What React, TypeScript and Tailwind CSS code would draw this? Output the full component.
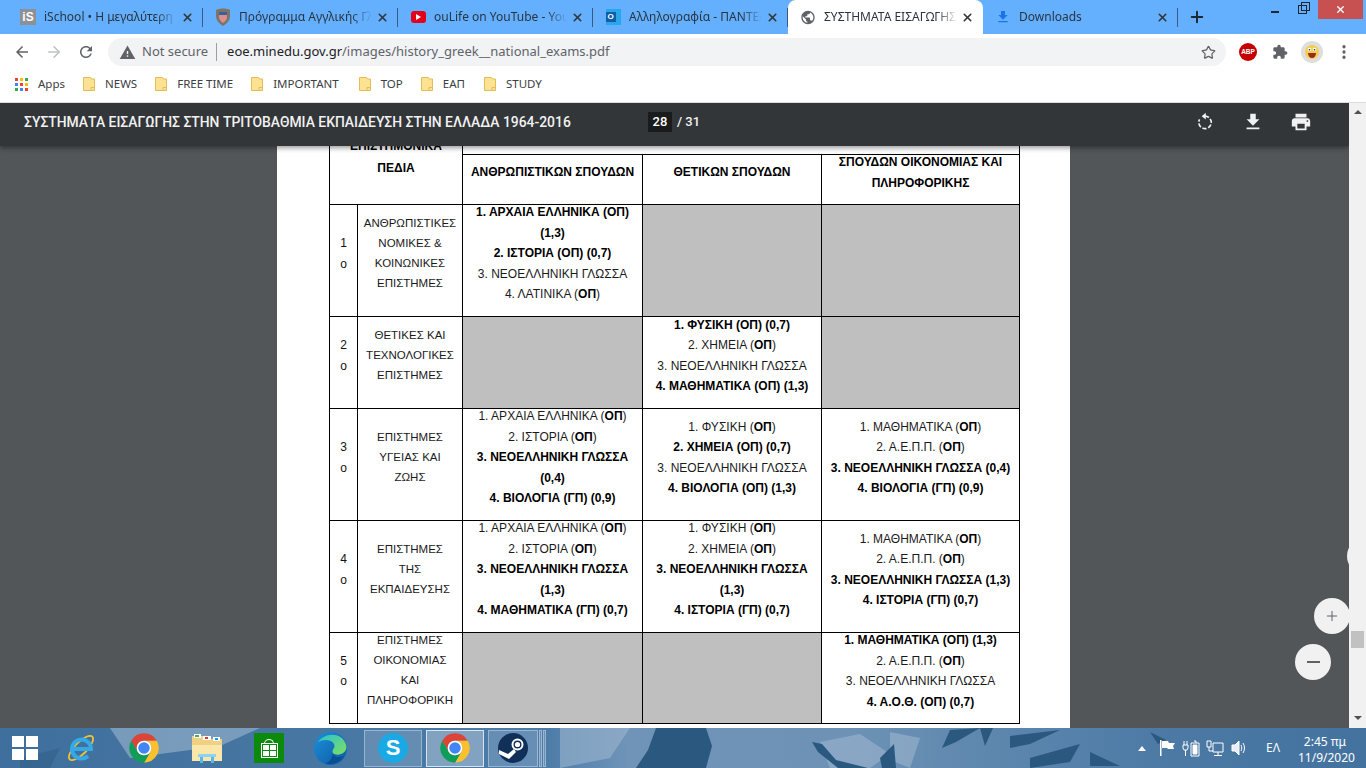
import type { ReactNode } from 'react';
import { ArrowRight, MoreVertical, Plus, Star, X } from 'lucide-react';

const ui = 'font-["Noto_Sans",sans-serif]';

function Mat({ d, className }: { d: string; className: string }) {
  return (
    <svg viewBox="0 0 24 24" className={className} fill="currentColor">
      <path d={d} />
    </svg>
  );
}

const icons = {
  back: 'M20 11H7.83l5.59-5.59L12 4l-8 8 8 8 1.41-1.41L7.83 13H20v-2z',
  reload:
    'M17.65 6.35C16.2 4.9 14.21 4 12 4c-4.42 0-7.99 3.58-7.99 8s3.57 8 7.99 8c3.73 0 6.84-2.55 7.73-6h-2.08c-.82 2.33-3.04 4-5.65 4-3.31 0-6-2.69-6-6s2.69-6 6-6c1.66 0 3.14.69 4.22 1.78L13 11h7V4l-2.35 2.35z',
  warn: 'M1 21h22L12 2 1 21zm12-3h-2v-2h2v2zm0-4h-2v-4h2v4z',
  download: 'M19 9h-4V3H9v6H5l7 7 7-7zM5 18v2h14v-2H5z',
  print:
    'M19 8H5c-1.66 0-3 1.34-3 3v6h4v4h12v-4h4v-6c0-1.66-1.34-3-3-3zm-3 11H8v-5h8v5zm3-7c-.55 0-1-.45-1-1s.45-1 1-1 1 .45 1 1-.45 1-1 1zm-1-9H6v4h12V3z',
  puzzle:
    'M20.5 11H19V7c0-1.1-.9-2-2-2h-4V3.5C13 2.12 11.88 1 10.5 1S8 2.12 8 3.5V5H4c-1.1 0-1.99.9-1.99 2v3.8H3.5c1.49 0 2.7 1.21 2.7 2.7s-1.21 2.7-2.7 2.7H2V20c0 1.1.9 2 2 2h3.8v-1.5c0-1.49 1.21-2.7 2.7-2.7 1.49 0 2.7 1.21 2.7 2.7V22H17c1.1 0 2-.9 2-2v-4h1.5c1.38 0 2.5-1.12 2.5-2.5S21.88 11 20.5 11z',
  globe:
    'M12 2C6.48 2 2 6.48 2 12s4.48 10 10 10 10-4.48 10-10S17.52 2 12 2zm-1 17.93c-3.95-.49-7-3.85-7-7.93 0-.62.08-1.21.21-1.79L9 15v1c0 1.1.9 2 2 2v1.93zm6.9-2.54c-.26-.81-1-1.39-1.9-1.39h-1v-3c0-.55-.45-1-1-1H8v-2h2c.55 0 1-.45 1-1V7h2c1.1 0 2-.9 2-2v-.41c2.93 1.19 5 4.06 5 7.41 0 2.08-.8 3.97-2.1 5.39z',
};

function ChromeLogo({ className }: { className: string }) {
  return (
    <svg viewBox="0 0 24 24" className={className}>
      <path fill="#db4437" d="M2.47 6.5A11 11 0 0 1 21.53 6.5H12A5.5 5.5 0 0 0 7.24 14.75Z" />
      <path fill="#fbc02d" d="M21.53 6.5A11 11 0 0 1 12 23L16.76 14.75A5.5 5.5 0 0 0 12 6.5Z" />
      <path fill="#0f9d58" d="M12 23A11 11 0 0 1 2.47 6.5L7.24 14.75A5.5 5.5 0 0 0 16.76 14.75Z" />
      <circle cx="12" cy="12" r="5.5" fill="#fff" />
      <circle cx="12" cy="12" r="4.3" fill="#4285f4" />
    </svg>
  );
}

function Tab({
  icon,
  title,
  active,
  last,
}: {
  icon: ReactNode;
  title: string;
  active?: boolean;
  last?: boolean;
}) {
  return (
    <div
      className={`relative flex h-[34px] w-[195px] shrink-0 items-center pl-[12px] ${
        active ? 'rounded-t-[8px] bg-white' : ''
      }`}
    >
      <div className="flex w-[16px] shrink-0 items-center justify-center">{icon}</div>
      <div className="ml-[8px] w-[133px] overflow-hidden whitespace-nowrap text-[12px] text-[#2a3440] [mask-image:linear-gradient(to_right,black_85%,transparent)]">
        {title}
      </div>
      <X className="ml-[4px] h-[13px] w-[13px] shrink-0 text-[#323639]" strokeWidth={3} />
      {!last && !active && <div className="absolute right-0 top-[8px] h-[19px] w-px bg-[#3c5a80]" />}
    </div>
  );
}

function Folder() {
  return (
    <svg viewBox="0 0 12 14" className="h-[14px] w-[12px] shrink-0">
      <path d="M.5.5h7l1 1.5h3v11.5H.5z" fill="#fde293" stroke="#e2bd55" />
      <path d="M8 13.5v-3h3.5" fill="none" stroke="#e2bd55" />
    </svg>
  );
}

function Bookmark({ label, className }: { label: string; className: string }) {
  return (
    <div className={`flex items-center gap-[10px] text-[11.5px] text-[#3c4043] ${className}`}>
      <Folder />
      <span>{label}</span>
    </div>
  );
}

function TabStrip() {
  return (
    <div className="relative flex h-[34px] bg-[#64b0ff] pl-[8px]">
      <Tab
        title="iSchool • Η μεγαλύτερη"
        icon={
          <div className="flex h-[16px] w-[16px] items-center justify-center bg-[#8d9196] font-['Liberation_Sans',sans-serif] text-[12px] font-bold leading-none text-white">
            iS
          </div>
        }
      />
      <Tab
        title="Πρόγραμμα Αγγλικής Γλ"
        icon={
          <svg viewBox="0 0 16 18" className="h-[18px] w-[16px]">
            <path d="M1 2c4-2 10-2 14 0v6c0 5-4 8-7 10-3-2-7-5-7-10z" fill="#7d7468" />
            <path d="M4 4h8v5c0 3-2 4-4 6-2-2-4-3-4-6z" fill="#d98f8f" />
            <path d="M4 4h8v3H4z" fill="#3c5f95" />
          </svg>
        }
      />
      <Tab
        title="ouLife on YouTube - You"
        icon={
          <div className="flex h-[12px] w-[15px] items-center justify-center rounded-[3px] bg-[#e3001b]">
            <div className="h-0 w-0 border-y-[3px] border-l-[5px] border-y-transparent border-l-white" />
          </div>
        }
      />
      <Tab
        title="Αλληλογραφία - ΠΑΝΤΕΛ"
        icon={
          <div className="relative h-[16px] w-[15px] bg-[#28a8ea]">
            <div className="absolute left-0 top-[3px] flex h-[10px] w-[10px] items-center justify-center bg-[#0f5ea8] font-['Liberation_Sans',sans-serif] text-[8px] font-bold leading-none text-white">
              O
            </div>
          </div>
        }
      />
      <Tab
        active
        title="ΣΥΣΤΗΜΑΤΑ ΕΙΣΑΓΩΓΗΣ"
        icon={<Mat d={icons.globe} className="h-[17px] w-[17px] text-[#5f6368]" />}
      />
      <Tab
        title="Downloads"
        icon={<Mat d={icons.download} className="h-[16px] w-[16px] text-[#1a73e8]" />}
      />
      <Plus className="ml-[10px] mt-[8px] h-[18px] w-[18px] text-[#1c2733]" strokeWidth={2.6} />
      <div className="absolute right-[3px] top-0 flex items-start">
        <div className="mt-[11px] h-[2px] w-[8px] bg-[#1c2733]" />
        <div className="relative ml-[19px] mt-[5px] mr-[11px] h-[9px] w-[9px] border border-[#1c2733]">
          <div className="absolute left-[2px] top-[-4px] h-[9px] w-[9px] border border-[#1c2733]" />
        </div>
        <div className="flex h-[19px] w-[45px] items-center justify-center bg-[#c75050]">
          <X className="h-[11px] w-[11px] text-white" strokeWidth={3} />
        </div>
      </div>
    </div>
  );
}

function AddressBar() {
  return (
    <div className="flex h-[34px] items-center bg-white pl-[13px] pr-[12px] pt-[2px] text-[#5f6368]">
      <Mat d={icons.back} className="h-[18px] w-[18px]" />
      <ArrowRight className="ml-[14px] h-[18px] w-[18px] text-[#bdc1c6]" strokeWidth={2} />
      <Mat d={icons.reload} className="ml-[14px] h-[18px] w-[18px]" />
      <div className="ml-[13px] flex h-[28px] w-[1118px] items-center rounded-full bg-[#f1f3f4] pl-[11px] pr-[10px]">
        <Mat d={icons.warn} className="h-[17px] w-[17px] shrink-0 text-[#5f6368]" />
        <span className="ml-[6px] text-[13px] text-[#5f6368]">Not secure</span>
        <div className="ml-[8px] h-[18px] w-px bg-[#9aa0a6]" />
        <span className="ml-[10px] text-[13px] text-[#5f6368]">
          <span className="text-[#202124]">eoe.minedu.gov.gr</span>/images/history_greek__national_exams.pdf
        </span>
        <Star className="ml-auto h-[15px] w-[15px] text-[#5f6368]" strokeWidth={2} />
      </div>
      <div className="ml-[13px] flex h-[18px] w-[18px] items-center justify-center rounded-full bg-[#c40000] font-['Liberation_Sans',sans-serif] text-[6.5px] font-bold leading-none text-white">
        ABP
      </div>
      <Mat d={icons.puzzle} className="ml-[15px] h-[16px] w-[16px] text-[#5f6368]" />
      <div className="ml-[13px] flex h-[22px] w-[22px] items-center justify-center rounded-full bg-[#dedede]">
        <svg viewBox="0 0 16 16" className="h-[16px] w-[16px]">
          <circle cx="8" cy="8" r="7" fill="#f3cf4e" />
          <circle cx="5.5" cy="5.5" r="1.8" fill="#fff" />
          <circle cx="10.5" cy="5.5" r="1.8" fill="#fff" />
          <circle cx="5.5" cy="5.8" r=".8" fill="#222" />
          <circle cx="10.5" cy="5.8" r=".8" fill="#222" />
          <path d="M4 9h8c0 3-2 5-4 5s-4-2-4-5z" fill="#9c2a22" />
        </svg>
      </div>
      <MoreVertical className="ml-[12px] h-[18px] w-[18px] text-[#5f6368]" strokeWidth={2.4} />
    </div>
  );
}

function Bookmarks() {
  const dots = ['#ea4335', '#fbbc05', '#34a853', '#4285f4', '#ea4335', '#fbbc05', '#34a853', '#4285f4', '#ea4335'];
  return (
    <div className={`flex h-[35px] items-center border-b border-[#dadce0] bg-white pb-[2px] pl-[15px] ${ui}`}>
      <div className="grid h-[13px] w-[13px] grid-cols-3 gap-[2px]">
        {dots.map((c, i) => (
          <div key={i} className="h-[3px] w-[3px]" style={{ backgroundColor: c }} />
        ))}
      </div>
      <span className="ml-[10px] text-[11.5px] text-[#3c4043]">Apps</span>
      <Bookmark label="NEWS" className="ml-[18px]" />
      <Bookmark label="FREE TIME" className="ml-[18px]" />
      <Bookmark label="IMPORTANT" className="ml-[18px]" />
      <Bookmark label="TOP" className="ml-[20px]" />
      <Bookmark label="ΕΑΠ" className="ml-[18px]" />
      <Bookmark label="STUDY" className="ml-[19px]" />
    </div>
  );
}

function PdfToolbar() {
  return (
    <div className="relative z-10 flex h-[43px] shrink-0 items-center bg-[#323639] pb-[5px] pl-[24px] text-white shadow-[0_2px_5px_rgba(0,0,0,0.4)]">
      <div className="w-[624px] whitespace-nowrap font-['Roboto',sans-serif] text-[13.9px] font-medium text-[#f1f1f1]">
        ΣΥΣΤΗΜΑΤΑ ΕΙΣΑΓΩΓΗΣ ΣΤΗΝ ΤΡΙΤΟΒΑΘΜΙΑ ΕΚΠΑΙΔΕΥΣΗ ΣΤΗΝ ΕΛΛΑΔΑ 1964-2016
      </div>
      <div className="flex h-[20px] w-[24px] items-center justify-center bg-[#191b1c] font-['Roboto',sans-serif] text-[13px] font-medium">
        28
      </div>
      <div className="ml-[5px] font-['Roboto',sans-serif] text-[13px] font-medium text-[#f1f1f1]">/ 31</div>
      <svg viewBox="0 0 24 24" className="ml-[495px] h-[20px] w-[20px]" fill="none" stroke="#f1f1f1" strokeWidth="2">
        <path d="M12 5a7.5 7.5 0 1 1-6.5 3.8" strokeDasharray="5 2.2" />
        <path d="M13 1v8l-5-4z" fill="#f1f1f1" stroke="none" />
      </svg>
      <Mat d={icons.download} className="ml-[27px] h-[22px] w-[22px] text-[#f1f1f1]" />
      <Mat d={icons.print} className="ml-[26px] h-[22px] w-[22px] text-[#f1f1f1]" />
    </div>
  );
}

type Line = { text: string; kind: 'n' | 'o' | 'b' };
const n = (text: string): Line => ({ text, kind: 'n' });
const o = (text: string): Line => ({ text, kind: 'o' });
const b = (text: string): Line => ({ text, kind: 'b' });

function Cell({ lines }: { lines?: Line[] }) {
  if (!lines) return <div className="bg-[#bfbfbf]" />;
  return (
    <div className="flex flex-col items-center justify-center bg-white pb-[14px] text-center">
      {lines.map((l, i) => (
        <div key={i} className={`whitespace-nowrap ${l.kind === 'b' ? 'font-bold text-black' : ''}`}>
          {l.text}
          {l.kind === 'o' && (
            <>
              {' ('}
              <b className="text-black">ΟΠ</b>
              {')'}
            </>
          )}
        </div>
      ))}
    </div>
  );
}

function Field({ num, lines }: { num: number; lines: string[] }) {
  return (
    <>
      <div className="flex flex-col items-center justify-center bg-white pb-[14px] text-[#111]">
        <div>{num}</div>
        <div>ο</div>
      </div>
      <div className="flex flex-col items-center justify-center bg-white pb-[16px] text-center text-[11.5px] leading-[20px]">
        {lines.map((l) => (
          <div key={l}>{l}</div>
        ))}
      </div>
    </>
  );
}

const rows: { num: number; name: string[]; cells: (Line[] | undefined)[] }[] = [
  {
    num: 1,
    name: ['ΑΝΘΡΩΠΙΣΤΙΚΕΣ', 'ΝΟΜΙΚΕΣ &', 'ΚΟΙΝΩΝΙΚΕΣ', 'ΕΠΙΣΤΗΜΕΣ'],
    cells: [
      [b('1. ΑΡΧΑΙΑ ΕΛΛΗΝΙΚΑ (ΟΠ)'), b('(1,3)'), b('2. ΙΣΤΟΡΙΑ (ΟΠ) (0,7)'), n('3. ΝΕΟΕΛΛΗΝΙΚΗ ΓΛΩΣΣΑ'), o('4. ΛΑΤΙΝΙΚΑ')],
      undefined,
      undefined,
    ],
  },
  {
    num: 2,
    name: ['ΘΕΤΙΚΕΣ ΚΑΙ', 'ΤΕΧΝΟΛΟΓΙΚΕΣ', 'ΕΠΙΣΤΗΜΕΣ'],
    cells: [
      undefined,
      [b('1. ΦΥΣΙΚΗ (ΟΠ) (0,7)'), o('2. ΧΗΜΕΙΑ'), n('3. ΝΕΟΕΛΛΗΝΙΚΗ ΓΛΩΣΣΑ'), b('4. ΜΑΘΗΜΑΤΙΚΑ (ΟΠ) (1,3)')],
      undefined,
    ],
  },
  {
    num: 3,
    name: ['ΕΠΙΣΤΗΜΕΣ', 'ΥΓΕΙΑΣ ΚΑΙ', 'ΖΩΗΣ'],
    cells: [
      [o('1. ΑΡΧΑΙΑ ΕΛΛΗΝΙΚΑ'), o('2. ΙΣΤΟΡΙΑ'), b('3. ΝΕΟΕΛΛΗΝΙΚΗ ΓΛΩΣΣΑ'), b('(0,4)'), b('4. ΒΙΟΛΟΓΙΑ (ΓΠ) (0,9)')],
      [o('1. ΦΥΣΙΚΗ'), b('2. ΧΗΜΕΙΑ (ΟΠ) (0,7)'), n('3. ΝΕΟΕΛΛΗΝΙΚΗ ΓΛΩΣΣΑ'), b('4. ΒΙΟΛΟΓΙΑ (ΟΠ) (1,3)')],
      [o('1. ΜΑΘΗΜΑΤΙΚΑ'), o('2. Α.Ε.Π.Π.'), b('3. ΝΕΟΕΛΛΗΝΙΚΗ ΓΛΩΣΣΑ (0,4)'), b('4. ΒΙΟΛΟΓΙΑ (ΓΠ) (0,9)')],
    ],
  },
  {
    num: 4,
    name: ['ΕΠΙΣΤΗΜΕΣ', 'ΤΗΣ', 'ΕΚΠΑΙΔΕΥΣΗΣ'],
    cells: [
      [o('1. ΑΡΧΑΙΑ ΕΛΛΗΝΙΚΑ'), o('2. ΙΣΤΟΡΙΑ'), b('3. ΝΕΟΕΛΛΗΝΙΚΗ ΓΛΩΣΣΑ'), b('(1,3)'), b('4. ΜΑΘΗΜΑΤΙΚΑ (ΓΠ) (0,7)')],
      [o('1. ΦΥΣΙΚΗ'), o('2. ΧΗΜΕΙΑ'), b('3. ΝΕΟΕΛΛΗΝΙΚΗ ΓΛΩΣΣΑ'), b('(1,3)'), b('4. ΙΣΤΟΡΙΑ (ΓΠ) (0,7)')],
      [o('1. ΜΑΘΗΜΑΤΙΚΑ'), o('2. Α.Ε.Π.Π.'), b('3. ΝΕΟΕΛΛΗΝΙΚΗ ΓΛΩΣΣΑ (1,3)'), b('4. ΙΣΤΟΡΙΑ (ΓΠ) (0,7)')],
    ],
  },
  {
    num: 5,
    name: ['ΕΠΙΣΤΗΜΕΣ', 'ΟΙΚΟΝΟΜΙΑΣ', 'ΚΑΙ', 'ΠΛΗΡΟΦΟΡΙΚΗ'],
    cells: [
      undefined,
      undefined,
      [b('1. ΜΑΘΗΜΑΤΙΚΑ (ΟΠ) (1,3)'), o('2. Α.Ε.Π.Π.'), n('3. ΝΕΟΕΛΛΗΝΙΚΗ ΓΛΩΣΣΑ'), b('4. Α.Ο.Θ. (ΟΠ) (0,7)')],
    ],
  },
];

function ExamTable() {
  return (
    <div className="ml-[52px] grid w-[691px] grid-cols-[27px_104px_179px_178px_197px] grid-rows-[20px_49px_111px_91px_111px_111px_90px] gap-px bg-black p-px font-['Liberation_Sans',sans-serif] text-[12px] leading-[20.5px] text-[#1a1a1a]">
      <div className="col-span-2 row-span-2 bg-white pt-px text-center font-bold leading-[22px] text-black">
        <div>ΕΠΙΣΤΗΜΟΝΙΚΑ</div>
        <div>ΠΕΔΙΑ</div>
      </div>
      <div className="col-span-3 bg-white" />
      <Cell lines={[b('ΑΝΘΡΩΠΙΣΤΙΚΩΝ ΣΠΟΥΔΩΝ')]} />
      <Cell lines={[b('ΘΕΤΙΚΩΝ ΣΠΟΥΔΩΝ')]} />
      <Cell lines={[b('ΣΠΟΥΔΩΝ ΟΙΚΟΝΟΜΙΑΣ ΚΑΙ'), b('ΠΛΗΡΟΦΟΡΙΚΗΣ')]} />
      {rows.map((r) => (
        <Field key={r.num} num={r.num} lines={r.name} />
      )).flatMap((f, i) => [f, ...rows[i].cells.map((c, j) => <Cell key={`${i}-${j}`} lines={c} />)])}
    </div>
  );
}

function Viewer() {
  return (
    <div className="relative flex min-h-0 flex-1 flex-col overflow-hidden bg-[#525659]">
      <PdfToolbar />
      <div className="ml-[277px] min-h-0 w-[793px] flex-1 overflow-hidden bg-white">
        <div className="-mt-[13px]">
          <ExamTable />
        </div>
      </div>
      <div className="absolute left-[1347px] top-[435px] h-[36px] w-[36px] rounded-full bg-[#f1f1f1]" />
      <div className="absolute left-[1314px] top-[495px] flex h-[36px] w-[36px] items-center justify-center rounded-full bg-[#f1f1f1] text-[#5f6368]">
        <Plus className="h-[16px] w-[16px]" strokeWidth={1.5} />
      </div>
      <div className="absolute left-[1295px] top-[541px] flex h-[36px] w-[36px] items-center justify-center rounded-full bg-[#f1f1f1]">
        <div className="h-[2px] w-[13px] bg-[#5f6368]" />
      </div>
    </div>
  );
}

function Scrollbar() {
  return (
    <div className="relative flex w-[17px] shrink-0 flex-col items-center bg-[#f1f1f1]">
      <div className="mt-[7px] h-0 w-0 border-x-[4px] border-b-[4px] border-x-transparent border-b-[#505050]" />
      <div className="mt-[517px] h-[17px] w-[13px] bg-[#c1c1c1]" />
      <div className="mt-[68px] h-0 w-0 border-x-[4px] border-t-[4px] border-x-transparent border-t-[#505050]" />
    </div>
  );
}

function Wallpaper() {
  return (
    <svg viewBox="0 0 1366 40" preserveAspectRatio="none" className="absolute inset-0 h-full w-full">
      <defs>
        <linearGradient id="wall" x1="0" x2="1" y1="0" y2="0">
          <stop offset="0" stopColor="#3f6f9c" />
          <stop offset="0.4" stopColor="#4d7ca8" />
          <stop offset="0.46" stopColor="#6f94b8" />
          <stop offset="0.62" stopColor="#6d92b5" />
          <stop offset="0.85" stopColor="#4c7aa5" />
          <stop offset="1" stopColor="#44729f" />
        </linearGradient>
      </defs>
      <rect width="1366" height="40" fill="url(#wall)" />
      <g fill="#9db6cf" opacity=".6">
        <path d="M110 0 260 0 220 18 130 30z" />
        <path d="M560 0h70l-20 30-50 10z" />
        <path d="M820 14l40-8 30 20-20 14h-40z" />
        <path d="M890 4l30 6-10 30-20-8z" />
      </g>
      <g fill="#2b587f">
        <path d="M656 0h50l6 18-6 22h-70l12-18z" />
        <path d="M812 14l10 2 14 16 32 8h-30l-20-16z" />
        <path d="M950 2l30-2-24 14-14 6z" />
        <path d="M1010 8l50-6-30 14-20 4z" />
        <path d="M1030 30l50-14-10 18-40 6z" />
        <path d="M980 0l5 18 8-18zM880 30l14-14 2 24h-14z" />
        <path d="M1150 4l16 8-8 4zM1090 24l30 14h-30z" />
        <path d="M20 30l40-10-10 20H20z" opacity=".4" />
      </g>
    </svg>
  );
}

function Taskbar() {
  return (
    <div className={`relative flex h-[40px] shrink-0 items-center text-white ${ui}`}>
      <Wallpaper />
      <div className="relative flex h-full w-full items-center">
        <div className="ml-[12px] grid h-[24px] w-[26px] grid-cols-2 gap-[2px]">
          <div className="bg-white" />
          <div className="bg-white" />
          <div className="bg-white" />
          <div className="bg-white" />
        </div>
        <svg viewBox="0 0 30 30" className="ml-[28px] h-[30px] w-[30px]" fill="none">
          <ellipse cx="15" cy="15" rx="16" ry="6" transform="rotate(-45 15 15)" stroke="#f2c230" strokeWidth="1.8" />
          <path d="M6 16h19A9.5 9.5 0 1 0 22 23" stroke="#35a9e6" strokeWidth="4" />
        </svg>
        <ChromeLogo className="ml-[32px] h-[32px] w-[32px]" />
        <svg viewBox="0 0 32 30" className="ml-[31px] h-[30px] w-[32px]">
          <path d="M1 3h11l2 3h17v22H1z" fill="#efd184" />
          <path d="M3 1h7v4H3zM12 3h8v4h-8zM22 4h7v4h-7z" fill="#fff" />
          <path d="M4 2h4v2H4z" fill="#4caf50" />
          <path d="M14 4h3v2h-3z" fill="#e53935" />
          <path d="M24 5h3v2h-3z" fill="#2196f3" />
          <path d="M1 12h30v16H1z" fill="#fbe7aa" />
          <path d="M7 21h18v3H7z" fill="#8fd3f4" />
          <path d="M9 24h3v6H9zM20 24h3v6h-3z" fill="#5bb7e8" />
        </svg>
        <div className="ml-[31px] flex h-[30px] w-[30px] flex-col items-center justify-center bg-[#0b8a0b]">
          <div className="h-[5px] w-[10px] rounded-t-full border border-b-0 border-white" />
          <div className="grid h-[13px] w-[15px] grid-cols-2 gap-[1px] bg-[#0b8a0b] p-px outline outline-1 outline-white">
            <div className="bg-white" />
            <div className="bg-white" />
            <div className="bg-white" />
            <div className="bg-white" />
          </div>
        </div>
        <svg viewBox="0 0 32 32" className="ml-[30px] h-[33px] w-[33px]">
          <defs>
            <linearGradient id="edge" x1="0" x2="1" y1="0" y2="1">
              <stop offset="0" stopColor="#1d8fd8" />
              <stop offset="1" stopColor="#0c59a4" />
            </linearGradient>
            <linearGradient id="edge2" x1="0" x2="1" y1="0" y2="1">
              <stop offset="0" stopColor="#2bc3d2" />
              <stop offset="1" stopColor="#7ee05f" />
            </linearGradient>
          </defs>
          <circle cx="16" cy="16" r="16" fill="url(#edge)" />
          <path d="M4 10C8 2 26-2 31 12c2 6-3 10-8 10-4 0-6-2-5-4 1-3 3-3 1-7-3-4-11-4-15-1z" fill="url(#edge2)" />
          <path d="M18 18c-1 5 5 8 11 5-4 7-12 10-18 7 4 0 8-6 7-12z" fill="#0a4f94" />
        </svg>
        <div className="ml-[17px] flex h-[37px] w-[58px] items-center justify-center border border-white/35 bg-white/15">
          <div className="flex h-[30px] w-[30px] items-center justify-center rounded-full bg-[#19a9e5] font-['Liberation_Sans',sans-serif] text-[22px] font-bold leading-none">
            S
          </div>
        </div>
        <div className="ml-[4px] flex h-[37px] w-[58px] items-center justify-center border border-white/70 bg-white/30">
          <ChromeLogo className="h-[32px] w-[32px]" />
        </div>
        <div className="ml-[4px] flex h-[37px] w-[50px] items-center justify-center border border-white/35 bg-white/15">
          <svg viewBox="0 0 30 30" className="h-[30px] w-[30px]">
            <circle cx="15" cy="15" r="15" fill="#10305a" />
            <circle cx="19.5" cy="11.5" r="5" fill="none" stroke="#fff" strokeWidth="2" />
            <circle cx="19.5" cy="11.5" r="2.6" fill="#fff" />
            <path d="M1 17l9 4 6-5 2 3-7 7-10-5z" fill="#fff" />
          </svg>
        </div>
        <div className="ml-px h-[37px] w-[3px] border border-white/35 bg-white/15" />
        <div className="ml-px h-[37px] w-[3px] border border-white/35 bg-white/15" />

        <div className="ml-[592px] h-0 w-0 border-x-[4px] border-b-[5px] border-x-transparent border-b-white" />
        <svg viewBox="0 0 18 18" className="ml-[12px] h-[18px] w-[18px]" fill="#fff">
          <path d="M2 1h1.5v16H2zM4 2h6l1 2h6l-2 3 1 3h-6l-1-1H4z" />
        </svg>
        <svg viewBox="0 0 18 18" className="ml-[6px] h-[18px] w-[18px]" fill="none" stroke="#fff">
          <path d="M2 2v4M5 2v4M1 6h5v3l-1 2H2L1 9zM3.5 11v6" />
          <path d="M9 4h8v13H9zM12 2h2v2" />
          <path d="M11 6h4v9h-4z" fill="#fff" />
        </svg>
        <svg viewBox="0 0 18 18" className="ml-[6px] h-[18px] w-[18px]" fill="none" stroke="#fff">
          <path d="M1 2h4v6H1zM7 4h10v9H7zM12 13v3M8 16.5h8M3 8v4h4" />
        </svg>
        <svg viewBox="0 0 18 18" className="ml-[6px] h-[18px] w-[18px]" fill="none" stroke="#fff">
          <path d="M2 6h3l4-4v14l-4-4H2z" fill="#e8eef4" />
          <path d="M11 6c1 2 1 4 0 6M13 4c2 3 2 7 0 10" />
        </svg>
        <div className="ml-[18px] text-[12px]">ΕΛ</div>
        <div className="ml-[18px] w-[54px] whitespace-nowrap pt-[4px] text-center text-[12px] leading-[16px]">
          <div>2:45 πμ</div>
          <div>11/9/2020</div>
        </div>
      </div>
    </div>
  );
}

export default function App() {
  return (
    <div className={`flex h-[768px] w-[1366px] flex-col overflow-hidden bg-white ${ui}`}>
      <TabStrip />
      <AddressBar />
      <Bookmarks />
      <div className="flex min-h-0 flex-1">
        <Viewer />
        <Scrollbar />
      </div>
      <Taskbar />
    </div>
  );
}
